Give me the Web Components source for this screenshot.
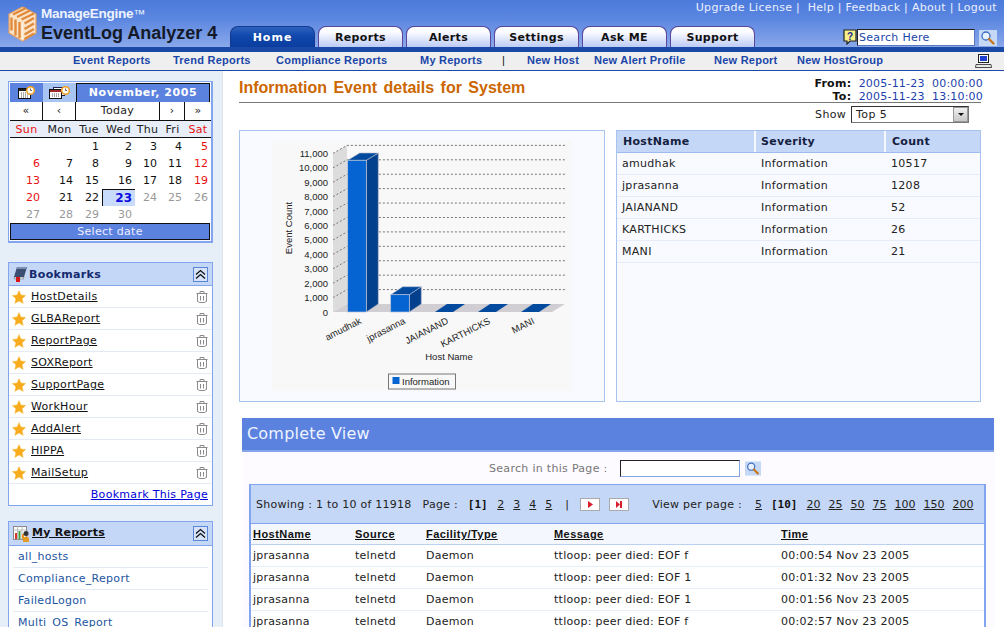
<!DOCTYPE html>
<html lang="en">
<head>
<meta charset="utf-8">
<title>EventLog Analyzer</title>
<style>
html,body{margin:0;height:627px;overflow:hidden;background:#fff}
body{font:11px "DejaVu Sans",Verdana,sans-serif;color:#222}
</style>
</head>
<body>
<ela-app></ela-app>
<script>
const ICONS={
 search:`<svg width="18" height="16" viewBox="0 0 18 16"><rect width="18" height="16" fill="#c5d8f5"/><circle cx="7" cy="6" r="4" fill="#e8f2ff" stroke="#3f6fc0" stroke-width="1.3"/><path d="M10 9l4.500 4.500" stroke="#c8761c" stroke-width="2.400" stroke-linecap="round"/></svg>`,
 star:`<svg width="14" height="14" viewBox="0 0 14 14"><path d="M7 .6l2 4.400 4.700.5-3.500 3.200 1 4.700L7 11 2.800 13.400l1-4.700L.3 5.500 5 5z" fill="#f8ab1c" stroke="#f6c04a" stroke-width=".5"/></svg>`,
 trash:`<svg width="12" height="12" viewBox="0 0 12 12" fill="none" stroke="#8a8a8a"><path d="M.5 2.500h11M4 2.500V.5h4v2M1.500 2.500v8h.8q.2 1 1 1h5.400q.8 0 1-1h.8v-8M4.500 5v4.500M7.500 5v4.500"/></svg>`,
 collapse:`<svg width="15" height="15" viewBox="0 0 15 15" fill="none"><rect x=".5" y=".5" width="14" height="14" fill="#d5e2f8" stroke="#5a86d8"/><path d="M3 7.500l4.500-4 4.500 4M3 11.500l4.500-4 4.500 4" stroke="#111" stroke-width="1.300"/></svg>`,
 book:`<svg width="15" height="16" viewBox="0 0 15 16"><path d="M4 1h10l-3 10H1z" fill="#3c4f72"/><path d="M4 1h10l-1 2H3.400z" fill="#7c90b4"/><path d="M1 11h10l-.6 2H1.500z" fill="#dfe6f2" stroke="#444" stroke-width=".4"/><rect x="3" y="11" width="4" height="5" fill="#d81818"/></svg>`,
 reports:`<svg width="18" height="16" viewBox="0 0 18 16"><rect x=".5" y=".5" width="13" height="13" fill="#fff" stroke="#888"/><path d="M.5 4h13M4.500.5v13M9 .5v13" stroke="#bbb"/><rect x="2" y="7" width="2" height="6" fill="#d8382c"/><rect x="5.500" y="5" width="2" height="8" fill="#3fa03c"/><rect x="9" y="8" width="2" height="5" fill="#e09020"/><circle cx="13" cy="7.500" r="2.500" fill="#333"/><path d="M10 16v-2.500q0-3 3-3t3 3V16z" fill="#e49a24"/></svg>`,
 help:`<svg width="14" height="16" viewBox="0 0 14 16"><path d="M1 1h12v11H7l-3 3v-3H1z" fill="#f8f088" stroke="#222" stroke-width="1.200"/><text x="7" y="10.500" font-family="Liberation Sans" font-weight="700" font-size="10" text-anchor="middle" fill="#1a2a8a">?</text></svg>`,
 laptop:`<svg width="17" height="14" viewBox="0 0 17 14"><rect x="3.500" y=".5" width="10" height="8" fill="#fff" stroke="#222"/><rect x="5" y="2" width="7" height="5" fill="#1f3fd0"/><path d="M1 10.500h15l.5 3H.5z" fill="#e8e8e8" stroke="#222" stroke-width=".8"/></svg>`,
 cal1:`<svg width="17" height="13" viewBox="0 0 17 13"><rect x=".5" y="2.500" width="12" height="10" fill="#fff" stroke="#111"/><rect x="1" y="3" width="11" height="2" fill="#222"/><path d="M3 7h8M3 9h8M3 11h8" stroke="#555" stroke-dasharray="1 1"/><circle cx="12.500" cy="4.500" r="3.800" fill="#fff" stroke="#f0a020" stroke-width="1.500"/><path d="M12.500 2.500v2h1.500" stroke="#444" fill="none" stroke-width=".8"/></svg>`,
 cal2:`<svg width="21" height="13" viewBox="0 0 21 13"><rect x="4.500" y="1.500" width="11" height="8" fill="#fff" stroke="#225"/><rect x=".5" y="3.500" width="12" height="9" fill="#fff" stroke="#111"/><rect x="1" y="4" width="11" height="2" fill="#a02828"/><path d="M3 8h8M3 10h8" stroke="#555" stroke-dasharray="1 1"/><circle cx="16.500" cy="4.500" r="3.800" fill="#fff" stroke="#f0a020" stroke-width="1.500"/><path d="M16.500 2.500v2H18" stroke="#444" fill="none" stroke-width=".8"/></svg>`,
 next:`<svg width="5" height="7" viewBox="0 0 5 7"><path d="M0 0l5 3.500-5 3.500z" fill="#d8202c"/></svg>`,
 last:`<svg width="6" height="7" viewBox="0 0 6 7"><path d="M0 0l4 3.500-4 3.500z" fill="#d8202c"/><rect x="4" y="0" width="2" height="7" fill="#d8202c"/></svg>`,
 logo:`<svg width="29" height="36" viewBox="0 0 29 36"><path d="M14.500 1L28 8v19l-13.500 8L1 27V8z" fill="#fbe3c8" stroke="#e8a060" stroke-width="1.200" stroke-linejoin="round"/><g fill="none" stroke="#e08a3c" stroke-width="2.400"><path d="M5 8.500l13-6.500M9 11l13-6.500M13.500 13.500L26 7.500"/><path d="M3.500 11.500v13M7.500 13.500v16M11.500 16v16"/><path d="M16.500 17.500L26 12M16.500 23L26 17.500M16.500 28.500L26 23M16.500 33L26 27.500"/></g><path d="M14.500 16.500v18" stroke="#fff3e4" stroke-width="1"/></svg>`
};
function def(name,css,html){
  customElements.define(name,class extends HTMLElement{
    connectedCallback(){
      if(this.shadowRoot)return;
      const r=this.attachShadow({mode:"open"});
      r.innerHTML=`<style>${css}</style>`+(typeof html==="function"?html(this):html);
    }
  });
}

def("ela-tab",`:host{display:block;width:85px;height:21px;box-sizing:border-box;border:1px solid #58479c;border-bottom:0;border-radius:8px 8px 0 0;background:linear-gradient(#fff,#fbfcff 25%,#bccbf6);text-align:center;font:700 11px/21px "DejaVu Sans",sans-serif;letter-spacing:.35px;color:#111}
:host([active]){background:linear-gradient(#2f62c0,#1048ac 45%,#0a3d9e);border-color:#133a8c;color:#fff;letter-spacing:1px}`,`<slot></slot>`);

def("ela-header",`:host{display:block;height:52px;box-sizing:border-box;border-bottom:5px solid #1b49a8;background:linear-gradient(#4c7bdc,#5b86e0 40%,#8aa8ea);color:#fff;position:relative}
.bar{height:47px;display:grid;grid-template-columns:222px 1fr auto}
.brand{display:flex;gap:4px;padding:6px 0 0 8px;box-sizing:border-box}
.names{display:flex;flex-direction:column;font-family:"Liberation Sans",sans-serif;font-weight:700}
.me{font-size:13.500px;line-height:15px;color:#eef3ff;letter-spacing:-.25px;white-space:nowrap}
.me i{font-style:normal;font-weight:400;font-size:12px;letter-spacing:-.5px}
.ev{font-size:18px;line-height:23px;color:#141a28;white-space:nowrap}
.mid{display:flex;flex-direction:column;justify-content:flex-end;padding-left:8px}
.tabs{display:flex;gap:3px}
.right{position:absolute;right:0;top:0;bottom:0;width:320px;display:flex;flex-direction:column}
.top{font-size:11px;line-height:14px;text-align:right;padding:1px 7px 0 0;white-space:pre;letter-spacing:.3px;color:#eaf0ff}
.find{display:flex;align-items:center;margin-top:13px;padding-left:159px;box-sizing:border-box}
.inp{width:118px;height:17px;box-sizing:border-box;background:#fff;border:1px solid #5a78c0;border-top-color:#222;border-left-color:#222;color:#1a46a8;font-size:11px;line-height:15px;padding-left:1px;letter-spacing:.3px}
.go{margin:2px 0 0 4px;display:flex}
svg{display:block}`,
`<div class="bar"><div class="brand">${ICONS.logo}<div class="names"><span class="me">ManageEngine<i>™</i></span><span class="ev">EventLog Analyzer 4</span></div></div>
<div class="mid"><div class="tabs"><ela-tab active>Home</ela-tab><ela-tab>Reports</ela-tab><ela-tab>Alerts</ela-tab><ela-tab>Settings</ela-tab><ela-tab>Ask ME</ela-tab><ela-tab>Support</ela-tab></div></div></div>
<div class="right"><div class="top">Upgrade License |  Help | Feedback | About | Logout</div><div class="find">${ICONS.help}<div class="inp">Search Here</div><div class="go">${ICONS.search}</div></div></div>`);

def("ela-subnav",`:host{display:flex;height:19px;box-sizing:border-box;background:#efefef;border-bottom:1px solid #1b49a8;align-items:center;padding-bottom:2px;font:700 11px/16px "Liberation Sans",sans-serif;color:#1a46a8;white-space:nowrap;position:relative}
span{flex:none;letter-spacing:.24px}svg{display:block}
.i{margin-left:auto;margin-right:12px;margin-top:2px}`,
`<span style="margin-left:73px;width:100px">Event Reports</span><span style="width:103px">Trend Reports</span><span style="width:144px">Compliance Reports</span><span style="width:82px">My Reports</span><span style="width:25px;color:#111;font-weight:400">|</span><span style="width:67px">New Host</span><span style="width:120px">New Alert Profile</span><span style="width:83px">New Report</span><span>New HostGroup</span><span class="i">${ICONS.laptop}</span>`);

def("ela-calendar",`:host{display:block;width:205px;box-sizing:border-box;border:1px solid #82a5ee;border-width:1px 2px 2px 1px;padding:1px;background:#f8fafd;font-size:11px;margin-left:8px}
.head{display:grid;grid-template-columns:33px 33px 1fr;height:19px}
.ic{display:flex;align-items:center;justify-content:center;background:#5b82df}.ic.b{background:#a8c4f2}
.ttl{background:#5b82df;border:1px solid #111;border-width:1px 1px 0;color:#fff;font-weight:700;text-align:center;line-height:18px;letter-spacing:.55px}
table{border-collapse:separate;border-spacing:0;table-layout:fixed;width:201px;background:#fff}
td,th{padding:0;font-weight:400;box-sizing:border-box}
.nav td{height:18px;text-align:center;border-bottom:1px solid #111;border-right:1px solid #111;background:#fff;color:#222;line-height:18px;letter-spacing:.3px}
.nav td:last-child{border-right:0}
.dh th{height:17px;background:#e8eef8;border-bottom:1px solid #111;text-align:center;letter-spacing:.3px;color:#222}
.dh .r{color:#e81010}
.d td{height:17px;text-align:right;padding-right:3px;color:#111}
.d .r{color:#e81010}.d .o{color:#999}
.d .t{background:#c8dbfa;color:#0a0ae0;font-weight:700;box-shadow:inset 1px 1px 0 #111;font-size:12px}
.foot{height:17px;background:#5b82df;border:1px solid #111;color:#eef;text-align:center;line-height:15px;box-sizing:border-box;letter-spacing:.3px}
svg{display:block}`,
()=>{
 const rows=[[0,0,1,2,3,4,5],[6,7,8,9,10,11,12],[13,14,15,16,17,18,19],[20,21,22,23,24,25,26],[27,28,29,30,0,0,0]];
 const body=rows.map((r,ri)=>`<tr class="d">`+r.map((n,ci)=>{
   let c=(ci==0||ci==6)?"r":"";
   if(n>23)c="o";
   if(n==23)c="t";
   return `<td class="${c}">${n||""}</td>`}).join("")+`</tr>`).join("");
 return `<div class="head"><div class="ic">${ICONS.cal1}</div><div class="ic b">${ICONS.cal2}</div><div class="ttl">November, 2005</div></div>
 <table><colgroup><col style="width:33px"><col style="width:33px"><col style="width:26px"><col style="width:33px"><col style="width:25px"><col style="width:25px"><col style="width:26px"></colgroup>
 <tr class="nav"><td>«</td><td>‹</td><td colspan="3">Today</td><td>›</td><td>»</td></tr>
 <tr class="dh"><th class="r">Sun</th><th>Mon</th><th>Tue</th><th>Wed</th><th>Thu</th><th>Fri</th><th class="r">Sat</th></tr>${body}</table>
 <div class="foot">Select date</div>`;
});

def("ela-panel",`:host{display:block;width:205px;margin-left:8px;box-sizing:border-box;border:1px solid #82a5ee;background:#fff}
.h{height:22px;background:#c5d7f6;border-bottom:1px solid #82a5ee;display:flex;align-items:center;gap:1px;padding:0 4px;font-weight:700;color:#14296e;letter-spacing:.35px}
:host([dark]) .h{color:#111;height:23px}
:host([dark]) .t{text-decoration:underline;margin-top:-3px;letter-spacing:.25px}
.c{margin-left:auto;display:flex}svg{display:block}`,
(el)=>`<div class="h">${ICONS[el.getAttribute("icon")]}<span class="t">${el.getAttribute("label")}</span><span class="c">${ICONS.collapse}</span></div><slot></slot>`);

def("ela-bookmark",`:host{display:flex;height:22px;box-sizing:border-box;border-bottom:1px solid #e4ebf7;align-items:center;padding:0 4px 0 3px;color:#111;letter-spacing:.3px}
span{margin-left:5px;text-decoration:underline;flex:1}svg{display:block}`,
()=>`${ICONS.star}<span><slot></slot></span>${ICONS.trash}`);

def("ela-report",`:host{display:block;height:22px;box-sizing:border-box;margin:0 4px;padding-left:5px;border-bottom:1px solid #e4ebf7;line-height:21px;color:#1c559f;letter-spacing:.3px}`,`<slot></slot>`);

def("ela-sidebar",`:host{display:block;width:223px;box-sizing:border-box;background:#e6eef8;border-right:1px solid #dbe4f2;padding-top:10px;height:556px;overflow:hidden;flex:none}
.more{height:21px;text-align:right;padding-right:4px;line-height:21px;color:#0000d8;text-decoration:underline;letter-spacing:.3px}
.g1{height:19px}.g2{height:15px}`,
`<ela-calendar></ela-calendar><div class="g1"></div>
<ela-panel icon="book" label="Bookmarks">
${["HostDetails","GLBAReport","ReportPage","SOXReport","SupportPage","WorkHour","AddAlert","HIPPA","MailSetup"].map(x=>`<ela-bookmark>${x}</ela-bookmark>`).join("")}
<div class="more">Bookmark This Page</div></ela-panel><div class="g2"></div>
<ela-panel dark icon="reports" label="My Reports">${["all_hosts","Compliance_Report","FailedLogon","Multi_OS_Report"].map(x=>`<ela-report>${x}</ela-report>`).join("")}</ela-panel>`);

def("ela-chart",`:host{display:flex;width:366px;height:272px;box-sizing:border-box;border:1px solid #a9c3ef;background:#f8faff;padding:10px 0 0 32px}
svg{display:block}text{font-family:"Liberation Sans",sans-serif;fill:#222}`,
()=>{
 let ticks="",grid="";
 const y0=171,st=14.42;
 for(let i=0;i<=11;i++){
  const y=y0-i*st;
  ticks+=`<text x="56" y="${y+3.500}" font-size="9.500" text-anchor="end">${i?(i*1000).toLocaleString("en-US"):0}</text>`;
  if(i) grid+=`<path d="M61 ${y}L75 ${y-8}H293" fill="none" stroke="#777" stroke-dasharray="2 2"/>`;
 }
 const labels=[["amudhak",90,182],["jprasanna",134,182],["JAIANAND",177,182],["KARTHICKS",219,182],["MANI",263,182]].map(l=>`<text transform="translate(${l[1]} ${l[2]}) rotate(-27)" font-size="9.500" text-anchor="end">${l[0]}</text>`).join("");
 const flats=[163,206,249].map(x=>`<path d="M${x} 171h18l12-8h-18z" fill="#024a9e"/>`).join("");
 return `<svg width="300" height="250" viewBox="0 0 300 250"><rect width="300" height="250" fill="#f8f8f8"/>
 <path d="M61 12.600L75 4.600V163L61 171z" fill="#dcdcdc"/>
 <path d="M61 171L75 163H293L280 171z" fill="#d0ced2"/>
 ${grid}${ticks}
 <path d="M94.300 19.300L106.300 12V163L94.300 171z" fill="#02408e" stroke="#bbc" stroke-width=".6"/>
 <path d="M75.700 19.300L87.700 12H106.300L94.300 19.300z" fill="#024a9e" stroke="#bbc" stroke-width=".6"/>
 <rect x="75.700" y="19.300" width="18.600" height="151.700" fill="#0564d2" stroke="#b8c4d4" stroke-width=".7"/>
 <path d="M137.300 153.700L149.300 145.700V163L137.300 171z" fill="#02408e" stroke="#bbc" stroke-width=".6"/>
 <path d="M118.700 153.700L130.700 145.700H149.300L137.300 153.700z" fill="#024a9e" stroke="#bbc" stroke-width=".6"/>
 <rect x="118.700" y="153.700" width="18.600" height="17.300" fill="#0564d2" stroke="#b8c4d4" stroke-width=".7"/>
 ${flats}${labels}
 <text transform="translate(20 87) rotate(-90)" font-size="9.500" text-anchor="middle">Event Count</text>
 <text x="177" y="219" font-size="9.500" text-anchor="middle">Host Name</text>
 <rect x="116.500" y="233" width="67" height="15" fill="#f8f8f8" stroke="#777"/>
 <rect x="120.500" y="236" width="7" height="7" fill="#0564d2"/>
 <text x="130" y="244" font-size="9.500">Information</text></svg>`;
});

def("ela-summary",`:host{display:block;width:365px;height:272px;box-sizing:border-box;border:1px solid #a9c3ef;background:#f8faff}
.r{display:grid;grid-template-columns:139px 130px 1fr;height:22px;box-sizing:border-box;border-bottom:1px solid #e6edf8;line-height:21px;color:#222;letter-spacing:.3px}
.r span{padding-left:5px}
.hd{background:#c5d7f6;border-bottom:1px solid #9dbbef;font-weight:700;line-height:21px;color:#142040}
.hd span{border-right:2px solid #f4f8ff;padding-left:6px}.hd span:nth-child(2){padding-left:5px}.hd span:last-child{border:0}`,
`<div class="r hd"><span>HostName</span><span>Severity</span><span>Count</span></div>`+
[["amudhak",10517],["jprasanna",1208],["JAIANAND",52],["KARTHICKS",26],["MANI",21]].map(r=>`<div class="r"><span>${r[0]}</span><span>Information</span><span>${r[1]}</span></div>`).join(""));

def("ela-events",`:host{display:block;width:737px;margin-left:7px;box-sizing:border-box;border:1px solid #82a5ee;border-width:1px 2px 0 2px;background:#fff}
.tb{height:39px;box-sizing:border-box;background:#c5d7f6;border-bottom:1px solid #82a5ee;display:flex;align-items:center;padding:1px 0 0 5px;white-space:nowrap;letter-spacing:.25px;color:#222}
.tb u{margin-left:8px;letter-spacing:0}.tb u.p{margin-left:9px}.tb b{font-family:"DejaVu Sans Mono",monospace;margin-left:9px;letter-spacing:0;color:#111}
.btn{width:20px;height:13px;box-sizing:border-box;background:#fff;border:1px solid #aaa;display:inline-flex;align-items:center;justify-content:center;margin-left:9px}
.row{display:grid;grid-template-columns:102px 71px 128px 227px 1fr;height:22px;box-sizing:border-box;border-bottom:1px solid #e6edf8;line-height:22px;padding-left:2px;letter-spacing:.26px;color:#222}
.hd{background:#f4f7fe;border-bottom:1px solid #bcd0f2;font-weight:700;color:#111;height:21px;line-height:21px}
.hd span{font-family:"Liberation Sans",sans-serif;text-decoration:underline;letter-spacing:.45px}
svg{display:block}`,
()=>{
 const msgs=[["00:00:54","f"],["00:01:32","1"],["00:01:56","1"],["00:02:57","f"]];
 return `<div class="tb"><span>Showing : 1 to 10 of 11918</span><span style="margin-left:11px">Page :</span><b style="margin-left:10px">[1]</b><u class="p" style="margin-left:9.500px">2</u><u class="p">3</u><u class="p">4</u><u class="p">5</u><span style="margin:0 2px 0 13px">|</span><span class="btn">${ICONS.next}</span><span class="btn">${ICONS.last}</span><span style="margin-left:23px">View per page :</span><u style="margin-left:13px">5</u><b>[10]</b><u class="p">20</u>${[25,50,75,100,150,200].map(n=>`<u>${n}</u>`).join("")}</div>
 <div class="row hd"><span>HostName</span><span>Source</span><span>Facility/Type</span><span>Message</span><span>Time</span></div>`+
 msgs.map(m=>`<div class="row"><span>jprasanna</span><span>telnetd</span><span>Daemon</span><span>ttloop: peer died: EOF ${m[1]}</span><span>${m[0]} Nov 23 2005</span></div>`).join("");
});

def("ela-main",`:host{display:block;flex:1;min-width:0;padding:0;background:#fff;height:556px;overflow:hidden;box-sizing:border-box}
.top{display:flex;margin-left:16px;width:742px;height:32px;border-bottom:1px solid #777;box-sizing:border-box;position:relative}
h1{margin:0;font:700 16px/34px "Liberation Sans",sans-serif;color:#cc6600;word-spacing:2px;letter-spacing:0;white-space:nowrap}
.dates{position:absolute;right:-2px;top:6px;line-height:13px;text-align:right;white-space:pre;color:#1c3fae;letter-spacing:.2px}
.dates b{color:#111;letter-spacing:.25px}
.show{display:flex;justify-content:flex-end;align-items:center;gap:5px;height:22px;padding-right:35px;letter-spacing:.3px}
.sel{width:118px;height:17px;box-sizing:border-box;background:#fff;border:1px solid #777;border-top-color:#333;border-left-color:#333;display:flex;align-items:center;padding-left:4px;letter-spacing:.4px;justify-content:space-between}
.arr{width:15px;height:15px;background:linear-gradient(#f0f0f0,#c8c8c8);border:1px solid #999;box-sizing:border-box;position:relative}
.arr:after{content:"";position:absolute;left:4px;top:5px;border:3px solid transparent;border-top:3px solid #111}
.cards{display:flex;gap:11px;margin:5px 0 0 16px}
.cv{margin:16px 0 0 19px;width:752px;height:34px;box-sizing:border-box;background:#5b82df;border-bottom:2px solid #83a7ea;color:#eef3ff;font:16px/32px "DejaVu Sans",sans-serif;padding-left:5px;letter-spacing:.2px}
.wrap{margin-left:19px;width:752px;background:#fdfbff;padding-bottom:10px}
.srch{height:32px;display:flex;align-items:center;padding-left:247px;color:#777;letter-spacing:.3px}
.box{width:120px;height:17px;box-sizing:border-box;background:#fff;border:1px solid #84a4e8;border-top-color:#222;border-left-color:#222;margin-left:12px}
.sb{margin-left:5px;margin-top:1px;display:flex}svg{display:block}`,
`<div class="top"><h1>Information Event details for System</h1><div class="dates"><b>From:</b>  2005-11-23  00:00:00
<b>To:</b>  2005-11-23  13:10:00</div></div>
<div class="show"><span>Show</span><div class="sel"><span>Top 5</span><span class="arr"></span></div></div>
<div class="cards"><ela-chart></ela-chart><ela-summary></ela-summary></div>
<div class="cv">Complete View</div>
<div class="wrap"><div class="srch"><span>Search in this Page :</span><span class="box"></span><span class="sb">${ICONS.search.replace('width="18" height="16"','width="16" height="15"')}</span></div>
<ela-events></ela-events></div>`);

def("ela-app",`:host{display:block;width:1004px;height:627px;overflow:hidden}
.b{display:flex}`,`<ela-header></ela-header><ela-subnav></ela-subnav><div class="b"><ela-sidebar></ela-sidebar><ela-main></ela-main></div>`);
</script>
</body>
</html>
